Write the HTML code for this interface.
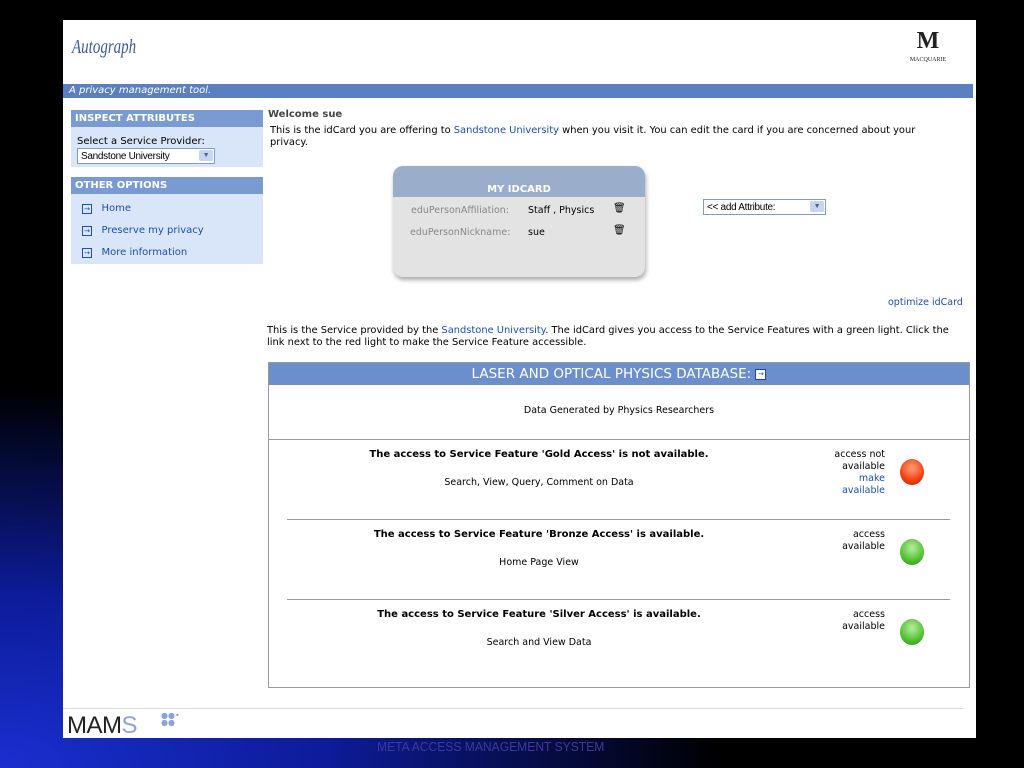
<!DOCTYPE html>
<html><head><style>
body{margin:0;width:1024px;height:768px;overflow:hidden;background:#000;position:relative;font-family:"DejaVu Sans",Verdana,sans-serif;font-size:9.5px;color:#000}
.bg{position:absolute;left:0;top:0;width:1024px;height:768px;background:radial-gradient(ellipse 720px 380px at 0px 768px,#1a2fd0 0%,#0d1c9a 45%,#000 100%)}
.pg{position:absolute;left:63px;top:20px;width:913px;height:718px;background:#fff}
.a{position:absolute;white-space:nowrap}
a,.lk{color:#1c4fb0;text-decoration:none}
.sel{position:absolute;background:#fff;border:1px solid #7f9db9;font-family:"Liberation Sans",sans-serif;font-size:10px;letter-spacing:-0.3px;box-sizing:border-box;padding:2px 3px}
.sel i{position:absolute;right:1px;top:1px;width:14px;height:11px;background:#c5d5f2;border-radius:2px;color:#4d6185;font-style:normal;font-size:7px;text-align:center;line-height:11px}
.ico{display:inline-block;width:8px;height:8px;border:1px solid #1c4fb0;font-size:7px;line-height:8px;text-align:center;color:#1c4fb0}
.dot{position:absolute;width:24px;height:26px;border-radius:50%}
</style></head><body>
<div class="bg"></div>
<div class="pg">
<div class="a" style="left:9px;top:16px;font-family:'Liberation Serif',serif;font-style:italic;font-size:20px;color:#3a58a8;transform:scaleX(0.75);transform-origin:left">Autograph</div>
<div class="a" style="left:840px;top:8px;width:50px;text-align:center;font-family:'Liberation Serif',serif;font-weight:bold;font-size:24px;color:#222">M</div>
<div class="a" style="left:838px;top:37px;width:54px;text-align:center;font-family:'Liberation Serif',serif;font-size:6px;color:#222">MACQUARIE</div>
<div class="a" style="left:0;top:64px;width:910px;height:14px;background:#5b80c2;color:#fff;font-style:italic;font-size:10px;line-height:14px;padding-left:6px;box-sizing:border-box">A privacy management tool.</div>

<div class="a" style="left:8px;top:90px;width:192px;height:17px;background:#7a9bd2;color:#fff;font-weight:bold;font-size:10px;line-height:17px;padding-left:4px;box-sizing:border-box">INSPECT ATTRIBUTES</div>
<div class="a" style="left:8px;top:107px;width:192px;height:40px;background:#d9e5f8"></div>
<div class="a" style="left:14px;top:116px;font-size:10px">Select a Service Provider:</div>
<div class="sel" style="left:14px;top:128px;width:138px;height:16px">Sandstone University<i>&#9660;</i></div>

<div class="a" style="left:8px;top:157px;width:192px;height:17px;background:#7a9bd2;color:#fff;font-weight:bold;font-size:10px;line-height:17px;padding-left:4px;box-sizing:border-box">OTHER OPTIONS</div>
<div class="a" style="left:8px;top:174px;width:192px;height:70px;background:#d9e5f8"></div>
<div class="a lk" style="left:19px;top:183px;font-size:10px"><span class="ico">&#8594;</span>&nbsp;&nbsp;&nbsp;Home</div>
<div class="a lk" style="left:19px;top:205px;font-size:10px"><span class="ico">&#8594;</span>&nbsp;&nbsp;&nbsp;Preserve my privacy</div>
<div class="a lk" style="left:19px;top:227px;font-size:10px"><span class="ico">&#8594;</span>&nbsp;&nbsp;&nbsp;More information</div>

<div class="a" style="left:205px;top:89px;font-weight:bold;color:#444;font-size:10px">Welcome sue</div>
<div class="a" style="left:207px;top:105px;width:685px;white-space:normal;line-height:11.5px;font-size:9.9px">This is the idCard you are offering to <span class="lk">Sandstone University</span> when you visit it. You can edit the card if you are concerned about your privacy.</div>

<div class="a" style="left:330px;top:146px;width:252px;height:111px;border-radius:10px;background:#e3e3e3;box-shadow:1px 3px 5px #aaa;overflow:hidden">
<div style="height:31px;background:#9aadca;color:#fff;font-weight:bold;font-size:10px;text-align:center;line-height:14px;padding-top:17px;box-sizing:border-box">MY IDCARD</div>
<div class="a" style="left:18px;top:39px;color:#888">eduPersonAffiliation:</div>
<div class="a" style="left:135px;top:39px">Staff , Physics</div>
<div class="a" style="left:220px;top:37px;font-size:10px">&#128465;</div>
<div class="a" style="left:17px;top:61px;color:#888">eduPersonNickname:</div>
<div class="a" style="left:135px;top:61px">sue</div>
<div class="a" style="left:220px;top:59px;font-size:10px">&#128465;</div>
</div>
<div class="sel" style="left:640px;top:179px;width:123px;height:16px">&lt;&lt; add Attribute:<i>&#9660;</i></div>

<div class="a lk" style="left:825px;top:277px">optimize idCard</div>
<div class="a" style="left:204px;top:305px;width:685px;white-space:normal;line-height:11.5px;font-size:9.9px">This is the Service provided by the <span class="lk">Sandstone University</span>. The idCard gives you access to the Service Features with a green light. Click the link next to the red light to make the Service Feature accessible.</div>

<div class="a" style="left:205px;top:342px;width:700px;height:324px;border:1px solid #999">
<div style="height:22px;background:#6a8fcc;color:#fff;font-size:13.5px;text-align:center;line-height:22px">LASER AND OPTICAL PHYSICS DATABASE: <span style="display:inline-block;width:9px;height:9px;background:#fff;border:1px solid #2244aa;color:#2244aa;font-size:7px;line-height:9px;vertical-align:middle">&#8594;</span></div>
<div class="a" style="left:0;top:42px;width:700px;text-align:center">Data Generated by Physics Researchers</div>
<div class="a" style="left:0;top:76px;width:700px;height:1px;background:#999"></div>
<div class="a" style="left:18px;top:156px;width:663px;height:1px;background:#999"></div>
<div class="a" style="left:18px;top:236px;width:663px;height:1px;background:#999"></div>

<div class="a" style="left:60px;top:86px;width:420px;text-align:center;font-weight:bold;font-size:10px">The access to Service Feature 'Gold Access' is not available.</div>
<div class="a" style="left:60px;top:114px;width:420px;text-align:center">Search, View, Query, Comment on Data</div>
<div class="a" style="left:520px;top:86px;width:96px;text-align:right;line-height:12px">access not<br>available<br><span class="lk">make<br>available</span></div>
<div class="dot" style="left:631px;top:96px;background:radial-gradient(circle at 50% 35%,#ffa07a,#f04010 60%,#c02000)"></div>

<div class="a" style="left:60px;top:166px;width:420px;text-align:center;font-weight:bold;font-size:10px">The access to Service Feature 'Bronze Access' is available.</div>
<div class="a" style="left:60px;top:194px;width:420px;text-align:center">Home Page View</div>
<div class="a" style="left:520px;top:166px;width:96px;text-align:right;line-height:12px">access<br>available</div>
<div class="dot" style="left:631px;top:176px;background:radial-gradient(circle at 50% 35%,#b8f0a0,#50c030 60%,#2a8a18)"></div>

<div class="a" style="left:60px;top:246px;width:420px;text-align:center;font-weight:bold;font-size:10px">The access to Service Feature 'Silver Access' is available.</div>
<div class="a" style="left:60px;top:274px;width:420px;text-align:center">Search and View Data</div>
<div class="a" style="left:520px;top:246px;width:96px;text-align:right;line-height:12px">access<br>available</div>
<div class="dot" style="left:631px;top:256px;background:radial-gradient(circle at 50% 35%,#b8f0a0,#50c030 60%,#2a8a18)"></div>
</div>

<div class="a" style="left:0;top:688px;width:900px;height:1px;background:#ddd"></div>
<div class="a" style="left:4px;top:692px;font-family:'Liberation Sans',sans-serif;font-size:24px;color:#222;letter-spacing:-0.5px">MAM<span style="color:#8aa4d8">S</span></div>
<div class="a" style="left:98px;top:692px;color:#8aa4d8;font-size:8px;line-height:7px">&#9679;&#9679;&#8226;<br>&#9679;&#9679;</div>
</div>
<div class="a" style="left:377px;top:739px;font-family:'Liberation Sans',sans-serif;font-size:13px;color:#3a3aa0;transform:scaleX(0.93);transform-origin:left">META ACCESS MANAGEMENT SYSTEM</div>
</body></html>
